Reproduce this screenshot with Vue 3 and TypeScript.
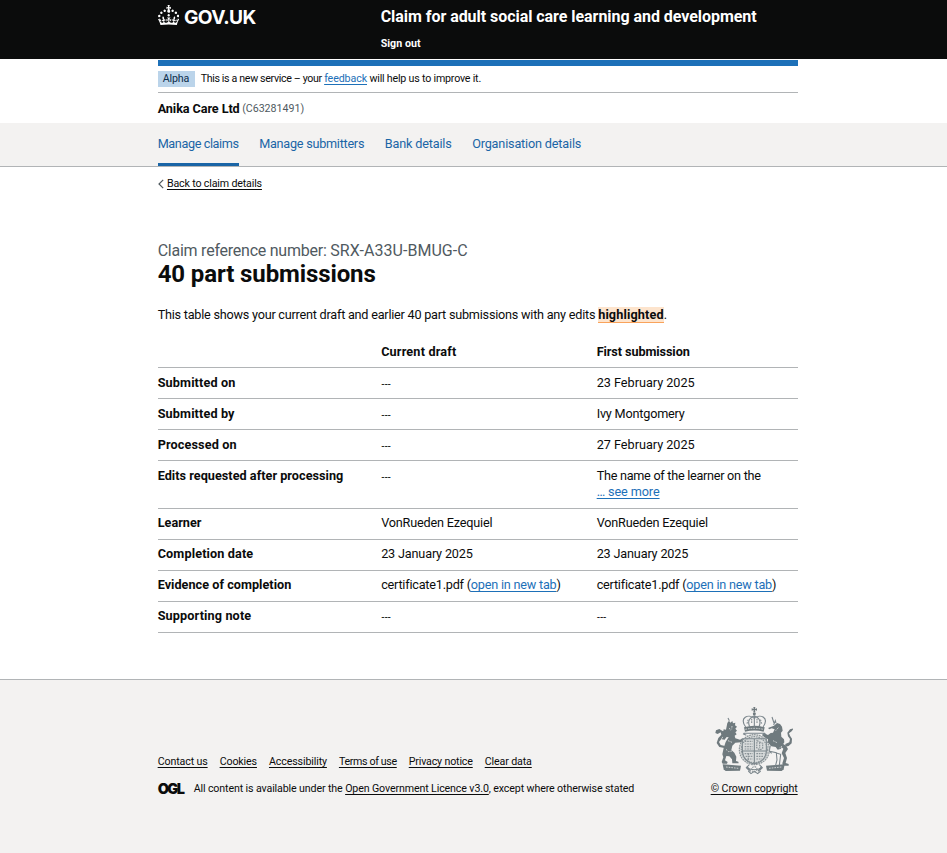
<script setup lang="ts">
interface Cell {
  text: string
  link?: string
  after?: string
  cls: string
  breakBefore?: boolean
}

interface Row {
  label: string
  cls: string
  tight?: boolean
  cells: Cell[]
}

const none: Cell = { text: '---', cls: 'dash' }
const learner: Cell = { text: 'VonRueden Ezequiel', cls: 'name' }
const completed: Cell = { text: '23 January 2025', cls: 'january' }
const evidence: Cell = { text: 'certificate1.pdf (', link: 'open in new tab', after: ')', cls: 'file' }

const rows: Row[] = [
  { label: 'Submitted on', cls: 'key', cells: [none, { text: '23 February 2025', cls: 'date' }] },
  { label: 'Submitted by', cls: 'key', cells: [none, { text: 'Ivy Montgomery', cls: 'name' }] },
  { label: 'Processed on', cls: 'key', cells: [none, { text: '27 February 2025', cls: 'date' }] },
  {
    label: 'Edits requested after processing',
    cls: 'key-long',
    cells: [none, { text: 'The name of the learner on the', link: '… see more', cls: 'note', breakBefore: true }],
  },
  { label: 'Learner', cls: 'key-long', tight: true, cells: [learner, learner] },
  { label: 'Completion date', cls: 'key', tight: true, cells: [completed, completed] },
  { label: 'Evidence of completion', cls: 'key-long', tight: true, cells: [evidence, evidence] },
  { label: 'Supporting note', cls: 'key', tight: true, cells: [none, none] },
]

const navItems = [
  { label: 'Manage claims', cls: 'nav-claims', active: true },
  { label: 'Manage submitters', cls: 'nav-submitters', active: false },
  { label: 'Bank details', cls: 'nav-bank', active: false },
  { label: 'Organisation details', cls: 'nav-org', active: false },
]

const footerLinks = ['Contact us', 'Cookies', 'Accessibility', 'Terms of use', 'Privacy notice', 'Clear data']
</script>

<template>
  <div class="page">
    <header class="header">
      <div class="container header-inner">
        <a class="logo" href="#">
          <svg class="crown" viewBox="0 0 32 30" aria-hidden="true">
            <path
              fill="currentColor"
              d="M22.6 10.4c-1 .4-2-.1-2.4-1-.4-.9.1-2 1-2.4.9-.4 2 .1 2.4 1s-.1 2-1 2.4m-5.9 6.7c-.9.4-2-.1-2.4-1-.4-.9.1-2 1-2.4.9-.4 2 .1 2.4 1s-.1 2-1 2.4m10.8-3.7c-1 .4-2-.1-2.4-1-.4-.9.1-2 1-2.4.9-.4 2 .1 2.4 1s0 2-1 2.4m3.3 4.8c-1 .4-2-.1-2.4-1-.4-.9.1-2 1-2.4.9-.4 2 .1 2.4 1s-.1 2-1 2.4M17 4.7l2.3 1.2V2.5l-2.3.7-.2-.2.9-3h-3.4l.9 3-.2.2c-.1.1-2.3-.7-2.3-.7v3.4L15 4.7c.1.1.1.2.2.2l-1.3 4c-.1.2-.1.4-.1.6 0 1.1.8 2 1.9 2.2h.7c1-.2 1.9-1.1 1.9-2.1 0-.2 0-.4-.1-.6l-1.3-4c-.1-.2 0-.2.1-.3m-7.6 5.7c.9.4 2-.1 2.4-1 .4-.9-.1-2-1-2.4-.9-.4-2 .1-2.4 1s0 2 1 2.4m-5 3c.9.4 2-.1 2.4-1 .4-.9-.1-2-1-2.4-.9-.4-2 .1-2.4 1s.1 2 1 2.4m-3.2 4.8c.9.4 2-.1 2.4-1 .4-.9-.1-2-1-2.4-.9-.4-2 .1-2.4 1s0 2 1 2.4m14.8 11c4.4 0 8.6.3 12.3.8 1.1-4.5 2.4-7 3.7-8.8l-2.5-.9c.2 1.3.3 1.9 0 2.7-.4-.4-.8-1.1-1.1-2.3l-1.2 4c.7-.5 1.3-.8 2-.9-1.1 2.5-2.6 3.1-3.5 3-1.1-.2-1.7-1.2-1.5-2.1.3-1.2 1.5-1.5 2.1-.1 1.1-2.3-.8-3-2-2.3 1.9-1.9 2.1-3.5.6-5.6-2.1 1.6-2.1 3.2-1.2 5.5-1.2-1.4-3.2-.6-2.5 1.6.9-1.4 2.1-.5 1.9.8-.2 1.1-1.7 2.1-3.5 1.9-2.7-.2-2.9-2.1-2.9-3.6.7-.1 1.9.5 2.9 1.9l.4-4.3c-1.1 1.1-2.1 1.4-3.2 1.4.4-1.2 2.1-3 2.1-3h-5.4s1.7 1.9 2.1 3c-1.1 0-2.1-.2-3.2-1.4l.4 4.3c1-1.4 2.2-2 2.9-1.9-.1 1.5-.2 3.4-2.9 3.6-1.9.2-3.4-.8-3.5-1.9-.2-1.3 1-2.2 1.9-.8.7-2.3-1.2-3-2.5-1.6.9-2.2.9-3.9-1.2-5.5-1.5 2-1.3 3.7.6 5.6-1.2-.7-3.1 0-2 2.3.6-1.4 1.8-1.1 2.1.1.2.9-.3 1.9-1.5 2.1-.9.2-2.4-.5-3.5-3 .6 0 1.2.3 2 .9l-1.2-4c-.3 1.1-.7 1.9-1.1 2.3-.3-.8-.2-1.4 0-2.7l-2.9.9C1.3 23 2.6 25.5 3.7 30c3.7-.5 7.9-.8 12.3-.8"
            />
          </svg>
          <span class="logo-text">GOV.UK</span>
        </a>
        <div class="service">
          <a class="service-name" href="#">Claim for adult social care learning and development</a>
          <a class="sign-out" href="#">Sign out</a>
        </div>
      </div>
    </header>

    <div class="container">
      <div class="blue-bar"></div>
      <div class="phase">
        <strong class="tag">Alpha</strong>
        <span class="phase-text">This is a new service – your <a class="link" href="#">feedback</a><span class="phase-end"> will help us to improve it.</span></span>
      </div>
      <div class="org">
        <strong class="org-name">Anika Care Ltd</strong>
        <span class="org-id">(C63281491)</span>
      </div>
    </div>

    <nav class="nav">
      <div class="container nav-inner">
        <a v-for="item in navItems" :key="item.label" href="#" :class="['nav-item', item.cls, { active: item.active }]">{{ item.label }}</a>
      </div>
    </nav>

    <main class="container main">
      <div class="back">
        <svg class="chevron" viewBox="0 0 6 10" aria-hidden="true"><path d="M5.2 .8 1 5l4.2 4.2" /></svg>
        <a href="#">Back to claim details</a>
      </div>
      <span class="caption">Claim reference number: <span class="reference">SRX-A33U-BMUG-C</span></span>
      <h1>40 part submissions</h1>
      <p class="intro">This table shows your current draft and earlier 40 part submissions with any edits <mark>highlighted</mark>.</p>

      <table>
        <colgroup>
          <col class="col-key" />
          <col class="col-draft" />
          <col class="col-first" />
        </colgroup>
        <thead>
          <tr>
            <td></td>
            <th scope="col" class="draft">Current draft</th>
            <th scope="col" class="first">First submission</th>
          </tr>
        </thead>
        <tbody>
          <tr v-for="row in rows" :key="row.label" :class="{ tight: row.tight }">
            <th scope="row" :class="row.cls">{{ row.label }}</th>
            <td v-for="(cell, i) in row.cells" :key="i" :class="cell.cls"><span>{{ cell.text }}</span><br v-if="cell.breakBefore" /><a v-if="cell.link" class="link" href="#">{{ cell.link }}</a>{{ cell.after }}</td>
          </tr>
        </tbody>
      </table>
    </main>

    <footer class="footer">
      <div class="container footer-inner">
        <div class="footer-meta">
          <ul class="footer-links">
            <li v-for="(label, i) in footerLinks" :key="label" :class="'footer-link-' + i"><a href="#">{{ label }}</a></li>
          </ul>
          <div class="licence">
            <span class="ogl">OGL</span>
            <span class="licence-text">All content is available under the <a href="#">Open Government Licence v3.0</a>, except where otherwise stated</span>
          </div>
        </div>
        <div class="copyright">
          <svg class="crest" viewBox="45 33 234 210" aria-hidden="true">
            <circle class="field" cx="163" cy="164" r="46" />
            <g class="solid">
              <path d="M160 36h6l-1 6 6-2v7l-6-2 1 7h-6l1-7-6 2v-7l6 2z" />
              <circle cx="163" cy="56" r="4.5" />
              <path d="M132 97q31-9 62 0l-3 13q-28-7-56 0z" />
              <path d="M82 84l5-7 4 6 6-5 2 7 7-2-1 8 6 4-5 6 5 6-5 5 4 6-6 4 2 8 14 4 6-3 3 6-6 5-17 1-9 9-3 13 9 8 6 12-1 13 7 2 1 5H97l-1-12-8-9-9-1-4 13 8 5-2 5H68l-3-5 5-14-3-9 4-19 6-18 9-15-7 1-5 7-9-1 4-7-7-2 7-7-7-4 8-5 1-5 7 1z" />
              <path d="M64 132l-7 9 5 9 13 3-2 6-15-3-8-12 5-15 9-10-2-7-9 5-7-3 2-8 10-4 11 7 1 10z" />
              <path d="M222 92l9-8 9 3 6 8 2 12-5 6 1 12 8 8 1 9-7 10-3 9-10 3-6-8-13-2-11-12 1-9-12-7-5-6 4-6 13 6 8-6 7-1 5-10-9-3-7 3-4-4z" />
              <path d="M246 145l12 7 6 10-8 12 5 15-4 15 9 3v5h-17l-2-7 5-16-7-14 5-14-10-8z" />
              <path d="M256 147l12-5 2-10-6-8-2-11 8-10 12-3-7 9-8 6 3 7 6 9-1 14-9 8-10 2z" />
              <path d="M68 208l55 4-3 15-43 1-6-5z" />
              <path d="M254 208l-56 4 3 15 44 1 6-5z" />
            </g>
            <g class="line">
              <path d="M137 96c-20-28 8-41 26-26 18-15 46-2 26 26M149 95c-9-20 4-29 14-33 10 4 23 13 14 33M163 63v33" />
              <path d="M131 115h64M139 121l-10-5M187 121l10-5" />
              <path d="M127 131h72v38q-3 31-36 38-33-7-36-38zM163 131v76M127 168h72" />
              <path d="M221 90l5-13 2 7M222 84l-6-18M209 169l20 4 2 22-5 19M229 174l13 4-4 33M145 228l8 8 10-7 10 7 9-8M141 214l11 15M185 214l-11 15M88 77l-4-8" />
              <path d="M211 151l-3 17 7 7M140 218q23 12 46 0M148 209l-9 9 9 9M178 209l9 9-9 9" />
            </g>
            <g class="texture">
              <path d="M134 139h24M134 147h24M134 155h24M134 162h24M169 176h24M169 184h22M169 192h17M134 176h24M137 184h21M142 192h16" />
              <path d="M171 137l17 8v15l-9 5-9-7zM179 142v18M145 175v21" />
              <circle cx="163" cy="164" r="45" />
              <circle cx="163" cy="164" r="39" />
              <path d="M141 86l4-13M185 86l-4-13M155 84V70M171 84V70" />
              <circle cx="163" cy="223" r="8" />
            </g>
            <g class="cut">
              <path d="M136 103q27-6 54 0M78 216l37 4M244 216l-37 4M88 99l4 8M96 93l-1 10M78 163l8 7 10-2M235 98l-8 9M246 154l-8 5M219 137l14 7M84 137l12 5" />
            </g>
          </svg>
          <a href="#">© Crown copyright</a>
        </div>
      </div>
    </footer>
  </div>
</template>

<style>
body {
  margin: 0;
  background: #fff;
}
</style>

<style scoped>
.page {
  min-height: 853px;
  display: flex;
  flex-direction: column;
  font-family: Roboto, "Liberation Sans", sans-serif;
  font-size: 12.67px;
  line-height: 17px;
  color: #0b0c0c;
  overflow-x: hidden;
}
a {
  color: inherit;
  text-decoration: underline;
  text-decoration-thickness: 1px;
  text-underline-offset: 2px;
  text-decoration-skip-ink: none;
}
.link {
  color: #1d70b8;
}
.container {
  box-sizing: border-box;
  width: 640px;
  margin-left: 157.67px;
}
.header {
  height: 59px;
  background: #0b0c0c;
  color: #fff;
}
.header a {
  text-decoration: none;
}
.header-inner {
  display: grid;
  grid-template-columns: 223px 1fr;
}
.logo {
  display: flex;
  gap: 5px;
  padding-top: 5px;
}
.crown {
  width: 21.33px;
  height: 20px;
}
.logo-text {
  font-family: Inter, sans-serif;
  font-size: 19.2px;
  line-height: 24px;
  font-weight: 700;
  letter-spacing: -0.55px;
}
.service {
  display: flex;
  flex-direction: column;
  padding-top: 7px;
}
.service-name {
  font-size: 16px;
  line-height: 20px;
  font-weight: 700;
  letter-spacing: -0.045px;
}
.sign-out {
  margin-top: 9px;
  font-size: 10.67px;
  line-height: 15px;
  font-weight: 700;
  letter-spacing: 0.04px;
}
.blue-bar {
  height: 6px;
  margin-top: 1px;
  background: #1d70b8;
}
.phase {
  display: flex;
  align-items: center;
  gap: 6px;
  height: 26px;
  border-bottom: 1px solid #b1b4b6;
  font-size: 10.67px;
}
.tag {
  box-sizing: border-box;
  width: 37px;
  height: 16px;
  margin-top: -1px;
  padding-left: 5px;
  line-height: 16px;
  font-weight: 400;
  letter-spacing: -0.14px;
  background: #bbd4ea;
  color: #0c2d4a;
}
.phase-text {
  margin-top: -1px;
  letter-spacing: -0.35px;
}
.phase-text .link {
  letter-spacing: -0.1px;
}
.phase-end {
  letter-spacing: -0.2px;
}
.org {
  display: flex;
  align-items: center;
  gap: 2.5px;
  height: 30px;
}
.org-name {
  letter-spacing: -0.09px;
}
.org-id {
  font-size: 10.67px;
  color: #505a5f;
  letter-spacing: -0.02px;
}
.nav {
  height: 43px;
  background: #f3f2f1;
  border-bottom: 1px solid #b1b4b6;
}
.nav-inner {
  display: flex;
  gap: 20.5px;
}
.nav-item {
  height: 28px;
  padding-top: 12px;
  border-bottom: 3px solid transparent;
  color: #1a65a6;
  text-decoration: none;
  white-space: nowrap;
}
.nav-item.active {
  border-bottom-color: #1a65a6;
}
.nav-claims {
  letter-spacing: -0.389px;
}
.nav-submitters {
  letter-spacing: -0.257px;
}
.nav-bank {
  letter-spacing: -0.16px;
}
.nav-org {
  letter-spacing: -0.174px;
}
.main {
  flex: 1;
}
.back {
  display: flex;
  align-items: center;
  gap: 3.3px;
  height: 15px;
  margin-top: 9px;
  font-size: 10.67px;
  letter-spacing: -0.16px;
}
.chevron {
  width: 6px;
  height: 10px;
  fill: none;
  stroke: #505a5f;
  stroke-width: 1.2;
}
.caption {
  display: block;
  margin-top: 50px;
  font-size: 16px;
  line-height: 20px;
  letter-spacing: -0.24px;
  color: #505a5f;
}
.reference {
  letter-spacing: 0.05px;
}
h1 {
  margin: 0;
  font-size: 24px;
  line-height: 26px;
  font-weight: 700;
  letter-spacing: -0.108px;
}
.intro {
  margin: 19px 0 14px;
  letter-spacing: -0.229px;
  white-space: nowrap;
}
mark {
  padding: 0;
  background: #fde4cd;
  color: inherit;
  border-bottom: 1px solid #f9a35c;
  font-weight: 700;
  letter-spacing: 0.135px;
}
table {
  width: 640px;
  table-layout: fixed;
  border-collapse: separate;
  border-spacing: 0;
  line-height: 16px;
}
.col-key {
  width: 223.5px;
}
.col-draft {
  width: 215.5px;
}
.col-first {
  width: 201px;
}
th,
td {
  padding: 7px 0;
  border-bottom: 1px solid #b1b4b6;
  text-align: left;
  vertical-align: top;
  white-space: nowrap;
}
.tight th,
.tight td {
  padding: 6px 0 8px;
}
th {
  font-weight: 700;
}
.draft {
  letter-spacing: 0.17px;
}
.first {
  letter-spacing: -0.09px;
}
.key {
  letter-spacing: 0.13px;
}
.key-long {
  letter-spacing: 0.03px;
}
.dash span {
  font-family: "Liberation Sans", sans-serif;
  font-size: 10px;
  line-height: 1;
  letter-spacing: -0.1px;
}
.name {
  letter-spacing: -0.19px;
}
.date {
  letter-spacing: -0.01px;
}
.january {
  letter-spacing: -0.17px;
}
.file {
  letter-spacing: -0.216px;
}
td.note {
  padding-bottom: 8px;
  letter-spacing: -0.273px;
}
.note .link {
  letter-spacing: -0.1px;
}
.footer {
  box-sizing: border-box;
  height: 174px;
  border-top: 1px solid #b1b4b6;
  background: #f3f2f1;
  font-size: 10.67px;
  line-height: 15px;
}
.footer-inner {
  display: flex;
  justify-content: space-between;
  align-items: flex-end;
  height: 116px;
}
.footer-links {
  display: flex;
  gap: 12px;
  margin: 0 0 12px;
  padding: 0;
  list-style: none;
  letter-spacing: -0.13px;
  white-space: nowrap;
}
.footer-link-3 {
  letter-spacing: -0.35px;
}
.footer-link-4 {
  letter-spacing: -0.17px;
}
.licence {
  display: flex;
  align-items: center;
  gap: 9px;
}
.ogl {
  width: 27px;
  font-family: Inter, sans-serif;
  font-size: 14.5px;
  font-weight: 900;
  letter-spacing: -1.6px;
}
.licence-text {
  letter-spacing: -0.129px;
  white-space: nowrap;
}
.copyright {
  display: flex;
  flex-direction: column;
  align-items: center;
  width: 87px;
  letter-spacing: -0.073px;
  white-space: nowrap;
}
.crest {
  width: 78px;
  height: 70px;
  margin: 0 1px 5px 0;
}
.field {
  fill: #d9dcdc;
}
.solid {
  fill: #6f7a7e;
}
.line {
  fill: none;
  stroke: #79848a;
  stroke-width: 3.2;
}
.texture {
  fill: none;
  stroke: #8b9498;
  stroke-width: 3.5;
  stroke-dasharray: 5 2.5;
}
.cut {
  fill: none;
  stroke: #e3e4e4;
  stroke-width: 2.4;
  stroke-dasharray: 5 3;
}
</style>
